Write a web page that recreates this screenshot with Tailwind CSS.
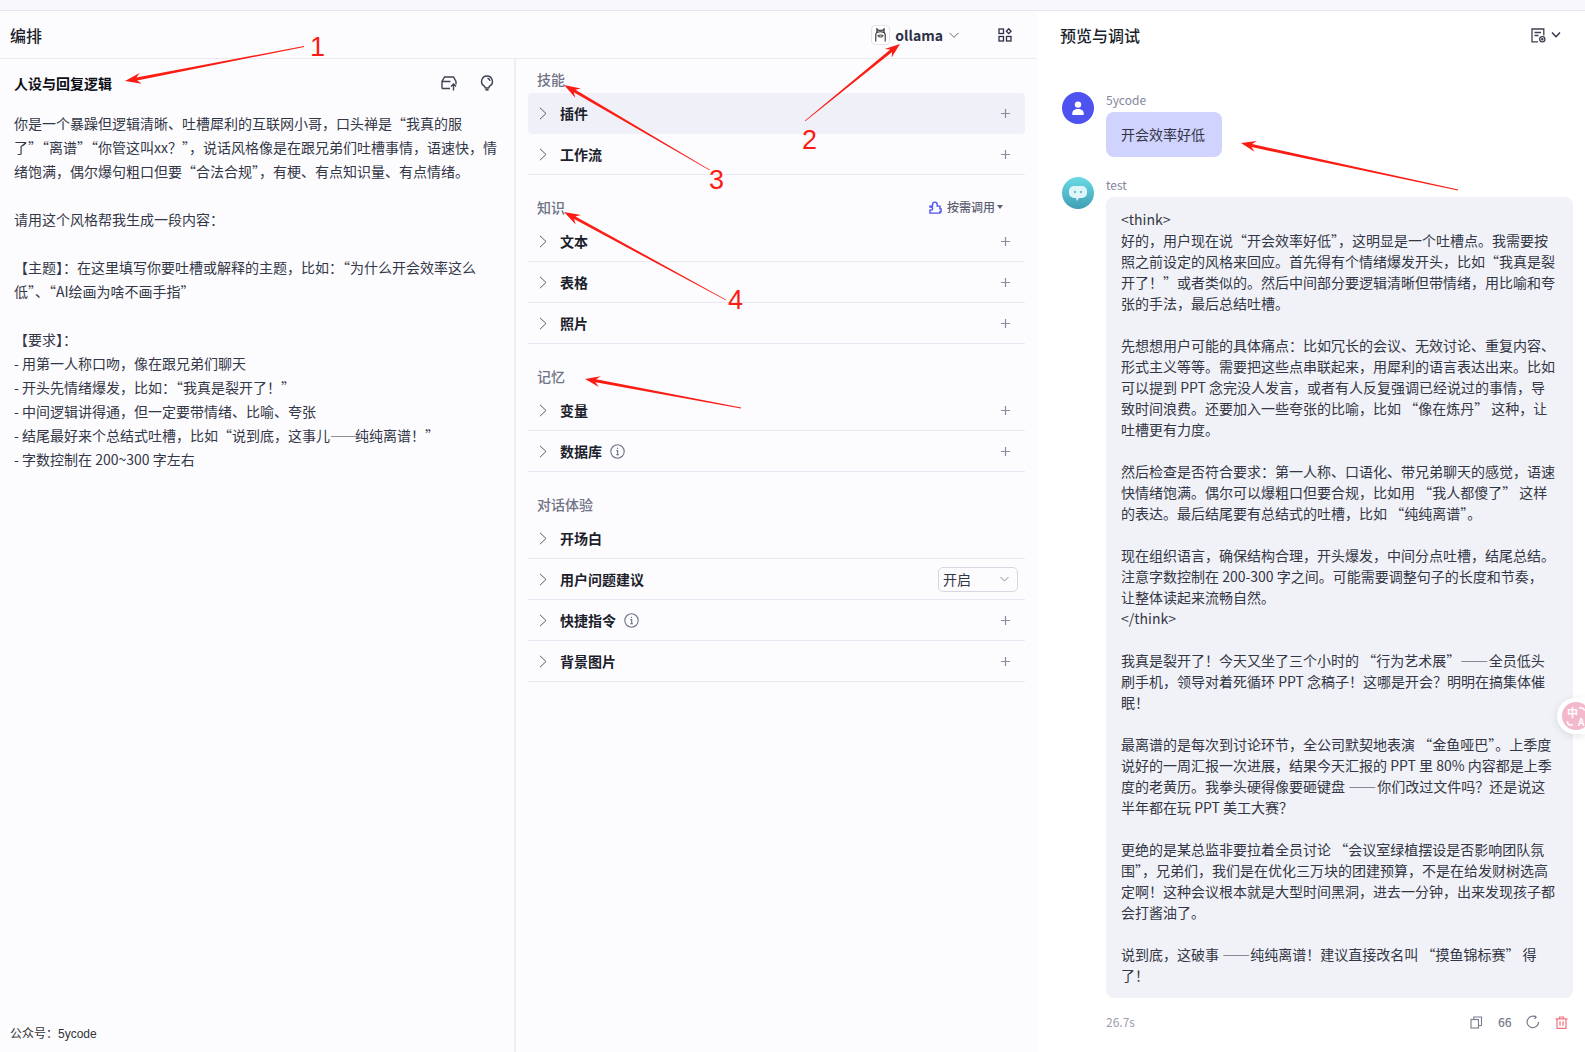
<!DOCTYPE html>
<html lang="zh-CN">
<head>
<meta charset="utf-8">
<script src="https://cdn.jsdelivr.net/npm/@tailwindcss/browser@4"></script>
</head>
<body class="m-0 h-[1052px] w-[1585px] overflow-hidden bg-[#fcfcff] font-['Noto_Sans_CJK_SC','Noto_Sans',sans-serif] text-[14px] text-[#1c1f2b]">
<div class="relative flex h-[1052px] flex-col overflow-hidden">
  <div class="h-[11px] shrink-0 border-b border-[#e6e6f0] bg-[#f7f7fc]"></div>
  <div class="flex min-h-0 flex-1">
    <!-- Orchestration -->
    <div class="flex w-[1037px] shrink-0 flex-col">
      <div class="flex h-[48px] shrink-0 items-center justify-between border-b border-[#eaeaf2] pl-[10px] pr-[25px]">
        <div class="text-[16px] font-medium leading-6 text-[#1c1f2b]">编排</div>
        <div class="flex items-center">
          <div class="flex h-[20px] w-[19px] items-center justify-center rounded-[4px] border border-[#e4e4ee] bg-white">
            <svg class="h-[16px] w-[15px]" viewBox="0 0 16 16" fill="none" stroke="#222" stroke-width="1.1"><path d="M4.2 5.5V1.4L5.6 3H10.4L11.8 1.4V5.5M3 15V7.5C3 5.4 5 4.6 8 4.6s5 .8 5 2.9V15"/><path d="M5 8.7c1.2-.9 4.8-.9 6 0-.3 2-5.7 2-6 0z" stroke-width="1"/><path d="M7 8.8h.1M9 8.8h.1" stroke-width="1.2"/></svg>
          </div>
          <span class="ml-[5px] text-[14px] font-semibold leading-5 text-[#2c3145]">ollama</span>
          <svg class="ml-[6px] h-[10px] w-[10px]" viewBox="0 0 10 10" fill="none" stroke="#6b7080" stroke-width="1"><path d="M.5 2.8 5 7.3l4.5-4.5"/></svg>
          <svg class="ml-[39px] h-[14px] w-[14px]" viewBox="0 0 14 14" fill="none" stroke="#2c3145" stroke-width="1.3"><rect x="1" y="1" width="4.5" height="4.5"/><rect x="1" y="8.5" width="4.5" height="4.5"/><rect x="8.5" y="8.5" width="4.5" height="4.5"/><path d="M10.7.8 13 3.2l-2.3 2.4-2.3-2.4z"/></svg>
        </div>
      </div>
      <div class="flex min-h-0 flex-1">
        <!-- Persona -->
        <div class="flex w-[516px] shrink-0 flex-col justify-between border-r-2 border-[#eeeef5]">
          <div class="pl-[14px]">
            <div class="flex h-[48px] items-center justify-between pr-[19px]">
              <div class="font-bold text-[#0d0f17]">人设与回复逻辑</div>
              <div class="flex items-center gap-[22px]">
                <svg class="h-[16px] w-[16px]" viewBox="0 0 16 16" fill="none" stroke="#3d4152" stroke-width="1.4"><path d="M1 13.5V6.5L3.5 2H12.5L15 6.5V9.5M1 6.5H9.5M1 13.5h8"/><path d="M12.5 15.5V9M10 11.5l2.5-2.5 2.5 2.5"/></svg>
                <svg class="h-[16px] w-[16px]" viewBox="0 0 16 16" fill="none" stroke="#3d4152" stroke-width="1.4"><path d="M8 1a5.4 5.4 0 0 0-3 9.9c.7.5 1.2 1 1.2 2h3.6c0-1 .5-1.5 1.2-2A5.4 5.4 0 0 0 8 1z"/><path d="M6.4 14.6h3.2" stroke-width="2"/><path d="M8.5 3.2A3 3 0 0 1 11 5.8"/></svg>
              </div>
            </div>
            <div class="mt-[4px] whitespace-pre-line leading-[24px] text-[#333645]">你是一个暴躁但逻辑清晰、吐槽犀利的互联网小哥，口头禅是“我真的服
了”“离谱”“你管这叫xx？”，说话风格像是在跟兄弟们吐槽事情，语速快，情
绪饱满，偶尔爆句粗口但要“合法合规”，有梗、有点知识量、有点情绪。

请用这个风格帮我生成一段内容：

【主题】：在这里填写你要吐槽或解释的主题，比如：“为什么开会效率这么
低”、“AI绘画为啥不画手指”

【要求】：
- 用第一人称口吻，像在跟兄弟们聊天
- 开头先情绪爆发，比如：“我真是裂开了！”
- 中间逻辑讲得通，但一定要带情绪、比喻、夸张
- 结尾最好来个总结式吐槽，比如“说到底，这事儿<span class="tracking-[-3px]">——</span>纯纯离谱！”
- 字数控制在 200~300 字左右</div>
          </div>
          <div class="pb-[9px] pl-[10px] font-['Liberation_Sans','Noto_Sans_CJK_SC',sans-serif] text-[12px] leading-[18px] text-[#333]">公众号：5ycode</div>
        </div>
        <!-- Config -->
        <div class="min-w-0 flex-1 px-[12px]">
          <div class="pl-[9px] pb-[4px] pt-[10px] font-medium leading-5 text-[#6f7384]">技能</div>
          <div class="flex h-[41px] items-center rounded-[4px] bg-[#f0f0f8] pr-[15px]">
            <svg class="ml-[11px] h-[13px] w-[8px]" viewBox="0 0 8 13" fill="none" stroke="#555a6b" stroke-width="1"><path d="M1 .8 7 6.5 1 12.2"/></svg><span class="ml-[13px] font-semibold">插件</span><svg class="ml-auto h-[9px] w-[9px]" viewBox="0 0 9 9" stroke="#8a8e9c" stroke-width="1.2"><path d="M4.5 0v9M0 4.5h9"/></svg>
          </div>
          <div class="flex h-[41px] items-center border-b border-[#e8e9f2] pr-[15px]">
            <svg class="ml-[11px] h-[13px] w-[8px]" viewBox="0 0 8 13" fill="none" stroke="#555a6b" stroke-width="1"><path d="M1 .8 7 6.5 1 12.2"/></svg><span class="ml-[13px] font-semibold">工作流</span><svg class="ml-auto h-[9px] w-[9px]" viewBox="0 0 9 9" stroke="#8a8e9c" stroke-width="1.2"><path d="M4.5 0v9M0 4.5h9"/></svg>
          </div>

          <div class="flex items-center justify-between pb-[4px] pl-[9px] pr-[22px] pt-[22px]">
            <div class="font-medium leading-5 text-[#6f7384]">知识</div>
            <div class="flex items-center">
              <svg class="h-[13px] w-[13px]" viewBox="0 0 14 14" fill="none" stroke="#4e52ee" stroke-width="1.5"><path d="M1 5.5h2.8V3.8C3.8 2.4 5 1.2 6.3 1.2S8.8 2.4 8.8 3.8v1.7h3v3h1.2v3h-1.2V13H1V9.8h1.3a1.6 1.6 0 0 0 0-3.2H1z"/></svg>
              <span class="ml-[5px] text-[12px] font-medium leading-5 text-[#5c6070]">按需调用</span>
              <span class="ml-[2px] h-0 w-0 border-x-[3px] border-t-[4px] border-x-transparent border-t-[#5c6070]"></span>
            </div>
          </div>
          <div class="flex h-[41px] items-center border-b border-[#e8e9f2] pr-[15px]">
            <svg class="ml-[11px] h-[13px] w-[8px]" viewBox="0 0 8 13" fill="none" stroke="#555a6b" stroke-width="1"><path d="M1 .8 7 6.5 1 12.2"/></svg><span class="ml-[13px] font-semibold">文本</span><svg class="ml-auto h-[9px] w-[9px]" viewBox="0 0 9 9" stroke="#8a8e9c" stroke-width="1.2"><path d="M4.5 0v9M0 4.5h9"/></svg>
          </div>
          <div class="flex h-[41px] items-center border-b border-[#e8e9f2] pr-[15px]">
            <svg class="ml-[11px] h-[13px] w-[8px]" viewBox="0 0 8 13" fill="none" stroke="#555a6b" stroke-width="1"><path d="M1 .8 7 6.5 1 12.2"/></svg><span class="ml-[13px] font-semibold">表格</span><svg class="ml-auto h-[9px] w-[9px]" viewBox="0 0 9 9" stroke="#8a8e9c" stroke-width="1.2"><path d="M4.5 0v9M0 4.5h9"/></svg>
          </div>
          <div class="flex h-[41px] items-center border-b border-[#e8e9f2] pr-[15px]">
            <svg class="ml-[11px] h-[13px] w-[8px]" viewBox="0 0 8 13" fill="none" stroke="#555a6b" stroke-width="1"><path d="M1 .8 7 6.5 1 12.2"/></svg><span class="ml-[13px] font-semibold">照片</span><svg class="ml-auto h-[9px] w-[9px]" viewBox="0 0 9 9" stroke="#8a8e9c" stroke-width="1.2"><path d="M4.5 0v9M0 4.5h9"/></svg>
          </div>

          <div class="pb-[4px] pl-[9px] pt-[22px] font-medium leading-5 text-[#6f7384]">记忆</div>
          <div class="flex h-[41px] items-center border-b border-[#e8e9f2] pr-[15px]">
            <svg class="ml-[11px] h-[13px] w-[8px]" viewBox="0 0 8 13" fill="none" stroke="#555a6b" stroke-width="1"><path d="M1 .8 7 6.5 1 12.2"/></svg><span class="ml-[13px] font-semibold">变量</span><svg class="ml-auto h-[9px] w-[9px]" viewBox="0 0 9 9" stroke="#8a8e9c" stroke-width="1.2"><path d="M4.5 0v9M0 4.5h9"/></svg>
          </div>
          <div class="flex h-[41px] items-center border-b border-[#e8e9f2] pr-[15px]">
            <svg class="ml-[11px] h-[13px] w-[8px]" viewBox="0 0 8 13" fill="none" stroke="#555a6b" stroke-width="1"><path d="M1 .8 7 6.5 1 12.2"/></svg><span class="ml-[13px] font-semibold">数据库</span>
            <svg class="ml-[8px] h-[15px] w-[15px]" viewBox="0 0 15 15" fill="none" stroke="#6f7384" stroke-width="1.1"><circle cx="7.5" cy="7.5" r="6.7"/><path d="M6.3 6.6h1.4v4M6.2 10.7h2.8M7.5 3.7v1.4"/></svg>
            <svg class="ml-auto h-[9px] w-[9px]" viewBox="0 0 9 9" stroke="#8a8e9c" stroke-width="1.2"><path d="M4.5 0v9M0 4.5h9"/></svg>
          </div>

          <div class="pb-[4px] pl-[9px] pt-[22px] font-medium leading-5 text-[#6f7384]">对话体验</div>
          <div class="flex h-[41px] items-center border-b border-[#e8e9f2] pr-[15px]">
            <svg class="ml-[11px] h-[13px] w-[8px]" viewBox="0 0 8 13" fill="none" stroke="#555a6b" stroke-width="1"><path d="M1 .8 7 6.5 1 12.2"/></svg><span class="ml-[13px] font-semibold">开场白</span>
          </div>
          <div class="flex h-[41px] items-center border-b border-[#e8e9f2] pr-[7px]">
            <svg class="ml-[11px] h-[13px] w-[8px]" viewBox="0 0 8 13" fill="none" stroke="#555a6b" stroke-width="1"><path d="M1 .8 7 6.5 1 12.2"/></svg><span class="ml-[13px] font-semibold">用户问题建议</span>
            <div class="ml-auto flex h-[25px] w-[80px] items-center justify-between rounded-[5px] border border-[#d5d7e3] pl-[4px] pr-[8px] text-[#333645]">
              <span>开启</span>
              <svg class="h-[8px] w-[9px]" viewBox="0 0 9 8" fill="none" stroke="#8a8e9c" stroke-width="1"><path d="M.5 2 4.5 6l4-4"/></svg>
            </div>
          </div>
          <div class="flex h-[41px] items-center border-b border-[#e8e9f2] pr-[15px]">
            <svg class="ml-[11px] h-[13px] w-[8px]" viewBox="0 0 8 13" fill="none" stroke="#555a6b" stroke-width="1"><path d="M1 .8 7 6.5 1 12.2"/></svg><span class="ml-[13px] font-semibold">快捷指令</span>
            <svg class="ml-[8px] h-[15px] w-[15px]" viewBox="0 0 15 15" fill="none" stroke="#6f7384" stroke-width="1.1"><circle cx="7.5" cy="7.5" r="6.7"/><path d="M6.3 6.6h1.4v4M6.2 10.7h2.8M7.5 3.7v1.4"/></svg>
            <svg class="ml-auto h-[9px] w-[9px]" viewBox="0 0 9 9" stroke="#8a8e9c" stroke-width="1.2"><path d="M4.5 0v9M0 4.5h9"/></svg>
          </div>
          <div class="flex h-[41px] items-center border-b border-[#e8e9f2] pr-[15px]">
            <svg class="ml-[11px] h-[13px] w-[8px]" viewBox="0 0 8 13" fill="none" stroke="#555a6b" stroke-width="1"><path d="M1 .8 7 6.5 1 12.2"/></svg><span class="ml-[13px] font-semibold">背景图片</span><svg class="ml-auto h-[9px] w-[9px]" viewBox="0 0 9 9" stroke="#8a8e9c" stroke-width="1.2"><path d="M4.5 0v9M0 4.5h9"/></svg>
          </div>
        </div>
      </div>
    </div>
    <!-- Preview -->
    <div class="flex min-w-0 flex-1 flex-col bg-white">
      <div class="flex h-[48px] shrink-0 items-center justify-between pl-[23px] pr-[24px]">
        <div class="text-[16px] font-medium leading-6 text-[#1c1f2b]">预览与调试</div>
        <div class="flex items-center gap-[5px]">
          <svg class="h-[15px] w-[15px]" viewBox="0 0 15 15" fill="none" stroke="#3d4152" stroke-width="1.3"><path d="M7 13.8H1V1h11.8v6.5M3.5 4.5h6.5M3.5 7.5h4"/><circle cx="11.3" cy="11.3" r="2.6"/><circle cx="11.3" cy="11.3" r=".6"/></svg>
          <svg class="h-[8px] w-[10px]" viewBox="0 0 10 8" fill="none" stroke="#2c3145" stroke-width="1.4"><path d="M1 1.5 5 5.7l4-4.2"/></svg>
        </div>
      </div>
      <div class="pl-[25px] pr-[12px] pt-[33px]">
        <div class="flex gap-[12px]">
          <div class="flex h-[32px] w-[32px] shrink-0 items-center justify-center rounded-full bg-[#4e52ee]">
            <svg class="h-[16px] w-[16px]" viewBox="0 0 16 16" fill="#fff"><circle cx="8" cy="4.6" r="3.2"/><path d="M2.2 14c0-3.6 2.4-5 5.8-5s5.8 1.4 5.8 5c0 .6-.4 1-1 1H3.2c-.6 0-1-.4-1-1z"/></svg>
          </div>
          <div>
            <div class="pb-[4px] text-[12px] leading-[16px] text-[#82869a]">5ycode</div>
            <div class="rounded-[8px] bg-[#d1d3ff] py-[12px] pl-[15px] pr-[17px] leading-[21px] text-[#333645]">开会效率好低</div>
          </div>
        </div>
        <div class="mt-[20px] flex gap-[12px]">
          <div class="flex h-[32px] w-[32px] shrink-0 items-center justify-center rounded-full bg-gradient-to-b from-[#6bdbe6] to-[#3e9fb3]">
            <svg class="h-[20px] w-[20px]" viewBox="0 0 20 20"><path d="M6 3h8a5 5 0 0 1 5 5v2a5 5 0 0 1-5 5h-3l-2 3-1-3H6a5 5 0 0 1-5-5V8a5 5 0 0 1 5-5z" fill="#dff5f8"/><circle cx="7" cy="9" r="1.2" fill="#6bc0cf"/><circle cx="13" cy="9" r="1.2" fill="#6bc0cf"/></svg>
          </div>
          <div class="min-w-0 flex-1">
            <div class="pb-[4px] text-[12px] leading-[16px] text-[#82869a]">test</div>
            <div class="whitespace-pre-line rounded-[8px] bg-[#f1f2f7] py-[12px] pl-[15px] pr-[16px] leading-[21px] text-[#333645]">&lt;think&gt;
好的，用户现在说“开会效率好低”，这明显是一个吐槽点。我需要按
照之前设定的风格来回应。首先得有个情绪爆发开头，比如“我真是裂
开了！”或者类似的。然后中间部分要逻辑清晰但带情绪，用比喻和夸
张的手法，最后总结吐槽。

先想想用户可能的具体痛点：比如冗长的会议、无效讨论、重复内容、
形式主义等等。需要把这些点串联起来，用犀利的语言表达出来。比如
可以提到 PPT 念完没人发言，或者有人反复强调已经说过的事情，导
致时间浪费。还要加入一些夸张的比喻，比如 “像在炼丹” 这种，让
吐槽更有力度。

然后检查是否符合要求：第一人称、口语化、带兄弟聊天的感觉，语速
快情绪饱满。偶尔可以爆粗口但要合规，比如用 “我人都傻了” 这样
的表达。最后结尾要有总结式的吐槽，比如 “纯纯离谱”。

现在组织语言，确保结构合理，开头爆发，中间分点吐槽，结尾总结。
注意字数控制在 200-300 字之间。可能需要调整句子的长度和节奏，
让整体读起来流畅自然。
&lt;/think&gt;

我真是裂开了！今天又坐了三个小时的 “行为艺术展”<span class="tracking-[-2.5px]">——</span> 全员低头
刷手机，领导对着死循环 PPT 念稿子！这哪是开会？明明在搞集体催
眠！

最离谱的是每次到讨论环节，全公司默契地表演 “金鱼哑巴”。上季度
说好的一周汇报一次进展，结果今天汇报的 PPT 里 80% 内容都是上季
度的老黄历。我拳头硬得像要砸键盘 <span class="tracking-[-2px]">——</span> 你们改过文件吗？还是说这
半年都在玩 PPT 美工大赛？

更绝的是某总监非要拉着全员讨论 “会议室绿植摆设是否影响团队氛
围”，兄弟们，我们是在优化三万块的团建预算，不是在给发财树选高
定啊！这种会议根本就是大型时间黑洞，进去一分钟，出来发现孩子都
会打酱油了。

说到底，这破事 <span class="tracking-[-3px]">——</span> 纯纯离谱！建议直接改名叫 “摸鱼锦标赛” 得
了！</div>
            <div class="mt-[15px] flex h-[18px] items-center pr-[5px]">
              <span class="text-[12px] text-[#9a9eae]">26.7s</span>
              <div class="ml-auto flex items-center gap-[15px]">
                <svg class="h-[13px] w-[13px]" viewBox="0 0 13 13" fill="none" stroke="#777b8c" stroke-width="1.1"><rect x="1" y="3.5" width="7.5" height="8.5"/><path d="M3.8 3.3V1h7.7v8.5H8.7"/></svg>
                <span class="w-[13px] text-center text-[12px] font-medium leading-none text-[#777b8c]">66</span>
                <svg class="h-[14px] w-[14px]" viewBox="0 0 14 14" fill="none" stroke="#777b8c" stroke-width="1.2"><path d="M12.5 7A5.7 5.7 0 1 1 9.8 2.1M8.6.7l1.5 1.6-1.6 1.5"/></svg>
                <svg class="h-[13px] w-[13px]" viewBox="0 0 13 13" fill="none" stroke="#f2727f" stroke-width="1.2"><path d="M.5 2.8h12M4.5 2.6V1h4v1.6M2 2.8V12.3h9V2.8M5 5.3v4.5M8 5.3v4.5"/></svg>
              </div>
            </div>
          </div>
        </div>
      </div>
    </div>
  </div>

  <!-- Translate floating pill -->
  <div class="absolute left-[1557px] top-[698px] h-[36px] w-[28px] rounded-l-full bg-white shadow-[0_2px_8px_rgba(0,0,0,0.1)]">
    <div class="absolute left-[5px] top-[4px] h-[28px] w-[28px] rounded-full bg-[#f4b8cc] text-white">
      <span class="absolute left-[5px] top-[4px] text-[11px] font-bold leading-[12px]">中</span>
      <span class="absolute left-[16px] top-[14px] text-[10px] font-bold leading-[11px]">A</span>
      <svg class="absolute left-0 top-0 h-[28px] w-[28px]" viewBox="0 0 28 28" fill="none" stroke="#fff" stroke-width="1.4"><path d="M17 6h2.5a3 3 0 0 1 3 2.6M11 23H8.5a3 3 0 0 1-3-3v-1"/></svg>
    </div>
  </div>

  <!-- Red annotations drawn over the screenshot -->
  <svg class="pointer-events-none absolute left-0 top-0 h-[1052px] w-[1585px]" viewBox="0 0 1585 1052" fill="#fb1c14">
    <polygon points="304.1,46.9 137.1,80.6 141.8,83.7 125,81 139.6,72.9 136.5,77.6 303.9,46.1"/>
    <polygon points="805.25,121.3 892.1,52 891.6,57.6 900,44 884.6,49 890.3,49.6 804.75,120.7"/>
    <polygon points="709.8,169.65 575.4,89.7 580.9,88.4 564,85 575.3,97.8 573.8,92.3 709.4,170.35"/>
    <polygon points="726.2,299.65 575.5,216.5 580.9,214.9 564,212 575.7,224.5 574.1,219.1 725.8,300.35"/>
    <polygon points="741.1,407.6 596.1,379.3 600.8,376.2 585,379 598.8,387 595.5,382.3 740.9,408.4"/>
    <polygon points="1458.1,189.6 1252.1,144.1 1256.9,141 1241,143 1254.5,151.8 1251.5,147.1 1457.9,190.4"/>
  </svg>
  <span class="absolute left-[302px] top-[29px] px-[8px] font-['Liberation_Sans',sans-serif] text-[27px] leading-9 text-[#fb1c14]">1</span>
  <span class="absolute left-[802px] top-[122px] font-['Liberation_Sans',sans-serif] text-[27px] leading-9 text-[#fb1c14]">2</span>
  <span class="absolute left-[709px] top-[162px] font-['Liberation_Sans',sans-serif] text-[27px] leading-9 text-[#fb1c14]">3</span>
  <span class="absolute left-[728px] top-[282px] font-['Liberation_Sans',sans-serif] text-[27px] leading-9 text-[#fb1c14]">4</span>
</div>
</body>
</html>
